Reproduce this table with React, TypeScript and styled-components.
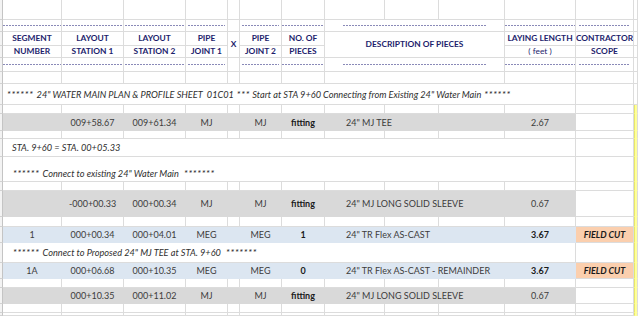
import styled, { createGlobalStyle, css } from 'styled-components';

const GlobalStyle = createGlobalStyle`
  body {
    margin: 0;
    background: #fff;
    font-family: Lato, 'Open Sans', sans-serif;
  }
`;

const COLS = [3, 59, 62, 62, 42, 12, 42, 43, 60, 54, 66, 71, 58, 4];
const ROWS = [20, 12, 14, 12, 14, 12, 21, 9, 17, 8, 18, 25, 9, 26, 10, 16, 20, 16, 9, 16, 9, 3];

const GRID = '#dcdcdc';
const FILLS = {
    none: '#ffffff',
    grey: '#d9d9d9',
    blue: '#dce6f1',
    orange: '#fbcfae',
    yellow: '#ffff99',
    gutter: '#f3f3f3',
};
type Fill = keyof typeof FILLS;
type Tone = 'head' | 'data' | 'note' | 'strong';

const Sheet = styled.div`
    display: grid;
    grid-template-columns: ${COLS.map((c) => `${c}px`).join(' ')};
    grid-template-rows: ${ROWS.map((r) => `${r}px`).join(' ')};
    width: 638px;
    height: 316px;
    overflow: hidden;
`;

const Cell = styled.div<{
    $fill?: Fill;
    $span?: number;
    $rows?: number;
    $align?: 'left' | 'center';
    $valign?: 'center' | 'end';
    $tone?: Tone;
    $bold?: boolean;
    $italic?: boolean;
    $pad?: number;
}>`
    grid-column: span ${({ $span }) => $span ?? 1};
    grid-row: span ${({ $rows }) => $rows ?? 1};
    box-sizing: border-box;
    display: flex;
    align-items: ${({ $valign }) => ($valign === 'end' ? 'flex-end' : 'center')};
    justify-content: ${({ $align }) => ($align === 'left' ? 'flex-start' : 'center')};
    padding-left: ${({ $pad }) => $pad ?? 0}px;
    padding-bottom: ${({ $valign }) => ($valign === 'end' ? 2 : 0)}px;
    overflow: hidden;
    white-space: pre;
    font-size: 9px;
    line-height: 11px;
    color: #3c3c3c;
    font-weight: ${({ $bold }) => ($bold ? 700 : 400)};
    font-style: ${({ $italic }) => ($italic ? 'italic' : 'normal')};
    background: ${({ $fill }) => FILLS[$fill ?? 'none']};
    border-right: 1px solid ${({ $fill }) => ($fill === 'grey' || $fill === 'blue' ? FILLS[$fill] : GRID)};
    border-bottom: 1px solid ${({ $fill }) => ($fill === 'grey' || $fill === 'blue' ? FILLS[$fill] : GRID)};

    ${({ $tone }) => $tone === 'head' && css`
        color: #1d1d6c;
        font-size: 8.4px;
    `}
    ${({ $tone }) => $tone === 'note' && css`
        color: #2e2e2e;
        font-size: 9.2px;
    `}
    ${({ $tone }) => $tone === 'strong' && css`
        color: #1a1a1a;
    `}
    ${({ $fill }) => $fill === 'gutter' && css`
        border-right-color: #c4c4c4;
        border-bottom-color: #d2d2d2;
    `}
    ${({ $fill }) => $fill === 'yellow' && css`
        border-bottom-color: #ffff99;
        border-left: 1px solid #e8e86a;
    `}
`;

const Stars = styled.span<{ $after?: boolean }>`
    letter-spacing: 0.8px;
    margin: ${({ $after }) => ($after ? '0 0 0 3px' : '0 3px 0 0')};
`;

const Dash = styled.span<{ $inset?: number }>`
    flex: 1;
    height: 1px;
    margin: 0 ${({ $inset }) => $inset ?? 1}px;
    background: repeating-linear-gradient(90deg, #8a8ab8 0 2px, transparent 2px 3px);
`;

const PLAIN = ['A', 'B', 'C', 'D', 'E', 'F', 'G', 'H', 'I', 'J', 'K', 'L'];

const Spacer = ({ yellow = true, mergeDesc = false }: { yellow?: boolean; mergeDesc?: boolean }) => (
    <>
        <Cell $fill="gutter" />
        {PLAIN.filter((c) => !(mergeDesc && (c === 'I' || c === 'J'))).map((c) => (
            <Cell key={c} $span={mergeDesc && c === 'H' ? 3 : 1} />
        ))}
        <Cell $fill={yellow ? 'yellow' : 'none'} />
    </>
);

const DashRow = () => (
    <>
        <Cell $fill="gutter" />
        <Cell><Dash $inset={0} /></Cell>
        <Cell><Dash /></Cell>
        <Cell><Dash /></Cell>
        <Cell><Dash $inset={2} /></Cell>
        <Cell />
        <Cell><Dash $inset={2} /></Cell>
        <Cell><Dash $inset={0} /></Cell>
        <Cell $span={3}><Dash $inset={18} /></Cell>
        <Cell><Dash $inset={0} /></Cell>
        <Cell><Dash $inset={3} /></Cell>
        <Cell />
    </>
);

const Note = ({ lead, text, tail, pad, valign }: { lead?: string; text: string; tail?: string; pad: number; valign?: 'center' | 'end' }) => (
    <>
        <Cell $fill="gutter" />
        <Cell $span={11} $align="left" $pad={pad} $italic $tone="note" $valign={valign}>
            {lead && <Stars>{lead}</Stars>}
            {text}
            {tail && <Stars $after>{tail}</Stars>}
        </Cell>
        <Cell />
        <Cell $fill="yellow" />
    </>
);

interface Piece {
    seg?: string;
    st1: string;
    st2: string;
    j1: string;
    j2: string;
    pcs: string;
    desc: string;
    len: string;
    lenBold?: boolean;
    scope?: string;
    fill: 'grey' | 'blue';
}

const PieceRow = ({ p }: { p: Piece }) => (
    <>
        <Cell $fill="gutter" />
        <Cell $fill={p.fill}>{p.seg ?? ''}</Cell>
        <Cell $fill={p.fill}>{p.st1}</Cell>
        <Cell $fill={p.fill}>{p.st2}</Cell>
        <Cell $fill={p.fill}>{p.j1}</Cell>
        <Cell $fill={p.fill} />
        <Cell $fill={p.fill}>{p.j2}</Cell>
        <Cell $fill={p.fill} $bold $tone="strong">{p.pcs}</Cell>
        <Cell $fill={p.fill} $span={3} $align="left" $pad={21}>{p.desc}</Cell>
        <Cell $fill={p.fill} $bold={p.lenBold} $tone={p.lenBold ? 'strong' : 'data'}>{p.len}</Cell>
        {p.scope
            ? <Cell $fill="orange" $bold $italic $tone="strong">{p.scope}</Cell>
            : <Cell />}
        <Cell $fill="yellow" />
    </>
);

const pieces: Piece[] = [
    { st1: '009+58.67', st2: '009+61.34', j1: 'MJ', j2: 'MJ', pcs: 'fitting', desc: '24" MJ TEE', len: '2.67', fill: 'grey' },
    { st1: '-000+00.33', st2: '000+00.34', j1: 'MJ', j2: 'MJ', pcs: 'fitting', desc: '24" MJ LONG SOLID SLEEVE', len: '0.67', fill: 'grey' },
    { seg: '1', st1: '000+00.34', st2: '000+04.01', j1: 'MEG', j2: 'MEG', pcs: '1', desc: '24" TR Flex AS-CAST', len: '3.67', lenBold: true, scope: 'FIELD CUT', fill: 'blue' },
    { seg: '1A', st1: '000+06.68', st2: '000+10.35', j1: 'MEG', j2: 'MEG', pcs: '0', desc: '24" TR Flex AS-CAST - REMAINDER', len: '3.67', lenBold: true, scope: 'FIELD CUT', fill: 'blue' },
    { st1: '000+10.35', st2: '000+11.02', j1: 'MJ', j2: 'MJ', pcs: 'fitting', desc: '24" MJ LONG SOLID SLEEVE', len: '0.67', fill: 'grey' },
];

const Head = ({ children, bold = true, rows }: { children?: React.ReactNode; bold?: boolean; rows?: number }) => (
    <Cell $tone="head" $bold={bold} $rows={rows}>{children}</Cell>
);

export default function App() {
    return (
        <>
            <GlobalStyle />
            <Sheet>
                <Spacer yellow={false} />
                <DashRow />

                <Cell $fill="gutter" />
                <Head>SEGMENT</Head>
                <Head>LAYOUT</Head>
                <Head>LAYOUT</Head>
                <Head>PIPE</Head>
                <Head rows={2}>X</Head>
                <Head>PIPE</Head>
                <Head>NO. OF</Head>
                <Cell $tone="head" $bold $rows={2} $span={3}>DESCRIPTION OF PIECES</Cell>
                <Head>LAYING LENGTH</Head>
                <Head>CONTRACTOR</Head>
                <Cell />

                <Cell $fill="gutter" />
                <Head>NUMBER</Head>
                <Head>STATION 1</Head>
                <Head>STATION 2</Head>
                <Head>JOINT 1</Head>
                <Head>JOINT 2</Head>
                <Head>PIECES</Head>
                <Head bold={false}>( feet )</Head>
                <Head>SCOPE</Head>
                <Cell />

                <DashRow />
                <Spacer yellow={false} mergeDesc />

                <Cell $fill="gutter" />
                <Cell $span={11} $align="left" $pad={4} $italic $tone="note">
                    <Stars>******</Stars>
                    {'24" WATER MAIN PLAN & PROFILE SHEET  01C01'}
                    <Stars $after>***</Stars>
                    {' Start at STA 9+60 Connecting from Existing 24" Water Main'}
                    <Stars $after>******</Stars>
                </Cell>
                <Cell />
                <Cell />

                <Spacer />
                <PieceRow p={pieces[0]} />
                <Spacer />
                <Note text="STA. 9+60 = STA. 00+05.33" pad={9} />
                <Note lead="******" text={'Connect to existing 24" Water Main '} tail="*******" pad={10} valign="end" />
                <Spacer />
                <PieceRow p={pieces[1]} />
                <Spacer />
                <PieceRow p={pieces[2]} />
                <Note lead="******" text={'Connect to Proposed 24" MJ TEE at STA. 9+60 '} tail="*******" pad={10} />
                <PieceRow p={pieces[3]} />
                <Spacer />
                <PieceRow p={pieces[4]} />
                <Spacer />
                <Spacer />
            </Sheet>
        </>
    );
}
